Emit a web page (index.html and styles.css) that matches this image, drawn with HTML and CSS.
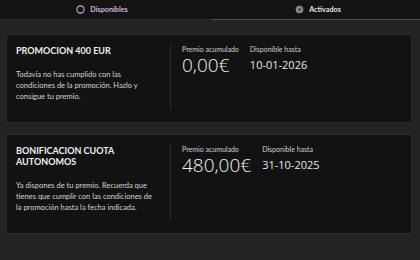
FILE: index.html
```html
<!DOCTYPE html>
<html lang="es">
<head>
<meta charset="utf-8">
<link rel="stylesheet" href="styles.css">
</head>
<body>
<div class="tabs">
  <div class="tab tab-disp">
    <svg class="ico" width="9" height="9" viewBox="0 0 9 9"><circle cx="4.5" cy="4.5" r="3.6" fill="none" stroke="#c9b2d6" stroke-width="1.1"/></svg>
    <span>Disponibles</span>
  </div>
  <div class="tab tab-act">
    <svg class="ico" width="9" height="9" viewBox="0 0 9 9"><circle cx="4.5" cy="4.5" r="3.8" fill="#8e8e8e"/><circle cx="4.5" cy="4.5" r="2" fill="#5e5e5e"/></svg>
    <span>Activados</span>
  </div>
</div>
<main class="list">
  <section class="card">
    <div class="info">
      <h2 class="title">PROMOCION 400 EUR</h2>
      <p class="desc">Todavía no has cumplido con las condiciones de la promoción. Hazlo y consigue tu premio.</p>
    </div>
    <div class="stats">
      <div class="stat">
        <div class="label">Premio acumulado</div>
        <div class="amount">0,00€</div>
      </div>
      <div class="stat">
        <div class="label">Disponible hasta</div>
        <div class="date">10-01-2026</div>
      </div>
    </div>
  </section>
  <section class="card">
    <div class="info">
      <h2 class="title">BONIFICACION CUOTA AUTONOMOS</h2>
      <p class="desc">Ya dispones de tu premio. Recuerda que tienes que cumplir con las condiciones de la promoción hasta la fecha indicada.</p>
    </div>
    <div class="stats">
      <div class="stat">
        <div class="label">Premio acumulado</div>
        <div class="amount">480,00€</div>
      </div>
      <div class="stat">
        <div class="label">Disponible hasta</div>
        <div class="date">31-10-2025</div>
      </div>
    </div>
  </section>
</main>
</body>
</html>
```
FILE: styles.css
```css
* { box-sizing: border-box; }
html, body { margin: 0; padding: 0; }
body {
  width: 420px;
  height: 260px;
  background: #232323;
  font-family: Lato, "Liberation Sans", sans-serif;
  color: #e6e6e6;
  overflow: hidden;
}
.tabs {
  display: flex;
  height: 20px;
  background: #131313;
}
.tab {
  flex: 1;
  display: flex;
  align-items: center;
  justify-content: center;
  gap: 5px;
  font-size: 7.2px;
  font-weight: 700;
  padding-bottom: 1px;
}
.tab-disp {
  color: #cdb3da;
  border-bottom: 1px solid #2b2b2b;
  padding-right: 8px;
}
.tab-act {
  color: #e4e4e4;
  border-bottom: 1px solid #505050;
  padding-left: 4px;
}
.ico { display: block; }
.list {
  display: flex;
  flex-direction: column;
  gap: 11px;
  padding: 14px 8px 0 6px;
}
.card {
  display: flex;
  background: #121212;
  border: 1px solid #2a2a2a;
  padding: 10px 0 13px 9px;
}
.info {
  width: 155px;
  padding-bottom: 7px;
  border-right: 1px solid #2e2e2e;
  padding-right: 12px;
}
.title {
  margin: 0 0 13px;
  font-size: 9px;
  line-height: 11px;
  font-weight: 700;
  color: #efefef;
}
.desc {
  margin: 0;
  font-size: 7.5px;
  line-height: 11px;
  color: #d2d2d2;
}
.stats {
  display: flex;
  gap: 11px;
  padding-left: 11px;
  align-items: flex-start;
}
.label {
  font-size: 7px;
  line-height: 9px;
  color: #cfcfcf;
}
.amount {
  font-family: "Open Sans", "Liberation Sans", sans-serif;
  font-size: 19px;
  line-height: 18px;
  margin-top: 2px;
  font-weight: 300;
  color: #f2f2f2;
}
.date {
  font-family: "Open Sans", "Liberation Sans", sans-serif;
  font-size: 11px;
  line-height: 18px;
  margin-top: 2px;
  font-weight: 400;
  color: #e6e6e6;
}
```
